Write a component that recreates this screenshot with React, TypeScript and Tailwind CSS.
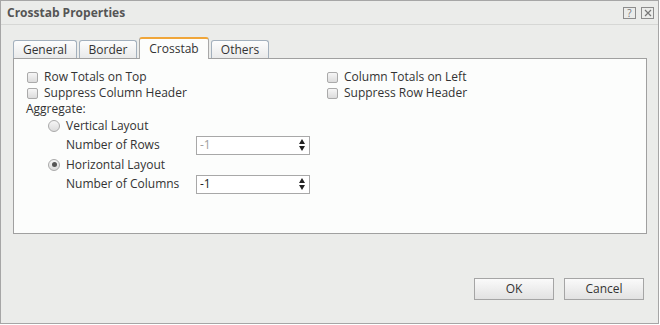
import React from "react";

const font = { fontFamily: '"Open Sans", "Noto Sans", Arial, sans-serif' };

function Checkbox({ label }: { label: string }) {
  return (
    <div className="flex items-center h-4">
      <span className="w-[11px] h-[11px] rounded-[2px] border border-[#aaaaaa] bg-gradient-to-b from-[#f6f6f6] to-[#dcdcdc]" />
      <span className="ml-[6px] text-[12px] text-[#333]">{label}</span>
    </div>
  );
}

function Radio({ label, checked }: { label: string; checked?: boolean }) {
  return (
    <div className="flex items-center h-full">
      <span className="w-[12px] h-[12px] rounded-full border border-[#aaaaaa] bg-gradient-to-b from-[#f6f6f6] to-[#dcdcdc] flex items-center justify-center">
        {checked && <span className="w-[5px] h-[5px] rounded-full bg-[#555]" />}
      </span>
      <span className="ml-[6px] text-[12px] text-[#333]">{label}</span>
    </div>
  );
}

function Spinner({ value, disabled }: { value: string; disabled?: boolean }) {
  return (
    <div className="w-[114px] h-[19px] border border-[#a8a8a8] bg-white flex items-center justify-between pl-[3px] pr-[4px]">
      <span className={`text-[12px] ${disabled ? "text-[#a0a0a0]" : "text-[#222]"}`}>{value}</span>
      <svg width="6" height="12" viewBox="0 0 6 12">
        <path d="M3 0 L6 5 L0 5 Z" fill="#222" />
        <path d="M0 7 L6 7 L3 12 Z" fill="#222" />
      </svg>
    </div>
  );
}

function Tab({ label, width, active }: { label: string; width: string; active?: boolean }) {
  if (active) {
    return (
      <div
        className={`${width} h-[22px] -mb-px relative z-10 bg-[#fcfdfc] border border-b-0 border-[#a8a8a8] border-t-2 border-t-[#f0a63a] rounded-t-[3px] flex items-center justify-center text-[12px] text-[#333]`}
      >
        {label}
      </div>
    );
  }
  return (
    <div
      className={`${width} h-[18px] bg-gradient-to-b from-[#fdfdfd] to-[#e9eaea] border border-b-0 border-[#a3b0bd] rounded-t-[3px] flex items-center justify-center text-[12px] text-[#333]`}
    >
      {label}
    </div>
  );
}

export default function App() {
  return (
    <div className="w-[660px] h-[325px] bg-white" style={font}>
      <div className="w-[659px] h-[324px] border border-[#a6a6a6] bg-[#ebecea] flex flex-col">
        <div className="h-6 shrink-0 border-b border-[#d6d7d5] flex items-center justify-between pl-[6px] pr-[4px]">
          <span className="text-[12px] font-bold text-[#555]">Crosstab Properties</span>
          <div className="flex items-center gap-[5px]">
            <span className="w-[13px] h-[12px] border border-[#8c8c8c] flex items-center justify-center text-[10px] leading-none text-[#777]">
              ?
            </span>
            <span className="w-[13px] h-[12px] border border-[#8c8c8c] flex items-center justify-center">
              <svg width="8" height="8" viewBox="0 0 8 8">
                <path d="M1 1 L7 7 M7 1 L1 7" stroke="#777" strokeWidth="1.2" />
              </svg>
            </span>
          </div>
        </div>

        <div className="mx-3 mt-3 flex items-end gap-[2px]">
          <Tab label="General" width="w-[64px]" />
          <Tab label="Border" width="w-[58px]" />
          <Tab label="Crosstab" width="w-[70px]" active />
          <Tab label="Others" width="w-[58px]" />
        </div>

        <div className="mx-3 w-[634px] h-[176px] border border-[#a0a0a0] bg-[#fcfdfc] pl-[13px] pt-[10px]">
          <div className="grid grid-cols-[300px_1fr]">
            <Checkbox label="Row Totals on Top" />
            <Checkbox label="Column Totals on Left" />
            <Checkbox label="Suppress Column Header" />
            <Checkbox label="Suppress Row Header" />
          </div>
          <div className="h-4 flex items-center -ml-px text-[12px] text-[#333]">Aggregate:</div>
          <div className="pl-[21px]">
            <div className="h-[18px]">
              <Radio label="Vertical Layout" />
            </div>
            <div className="h-[20px] flex items-center pl-[18px]">
              <span className="w-[130px] text-[12px] text-[#333]">Number of Rows</span>
              <Spinner value="-1" disabled />
            </div>
            <div className="h-[19px]">
              <Radio label="Horizontal Layout" checked />
            </div>
            <div className="h-[20px] flex items-center pl-[18px]">
              <span className="w-[130px] text-[12px] text-[#333]">Number of Columns</span>
              <Spinner value="-1" />
            </div>
          </div>
        </div>

        <div className="mt-auto mb-[23px] mr-[14px] flex justify-end gap-[10px]">
          <button className="w-[80px] h-[22px] border border-[#a5a5a5] bg-gradient-to-b from-[#fafafa] to-[#e2e2e2] text-[12px] text-[#333]">
            OK
          </button>
          <button className="w-[80px] h-[22px] border border-[#a5a5a5] bg-gradient-to-b from-[#fafafa] to-[#e2e2e2] text-[12px] text-[#333]">
            Cancel
          </button>
        </div>
      </div>
    </div>
  );
}
